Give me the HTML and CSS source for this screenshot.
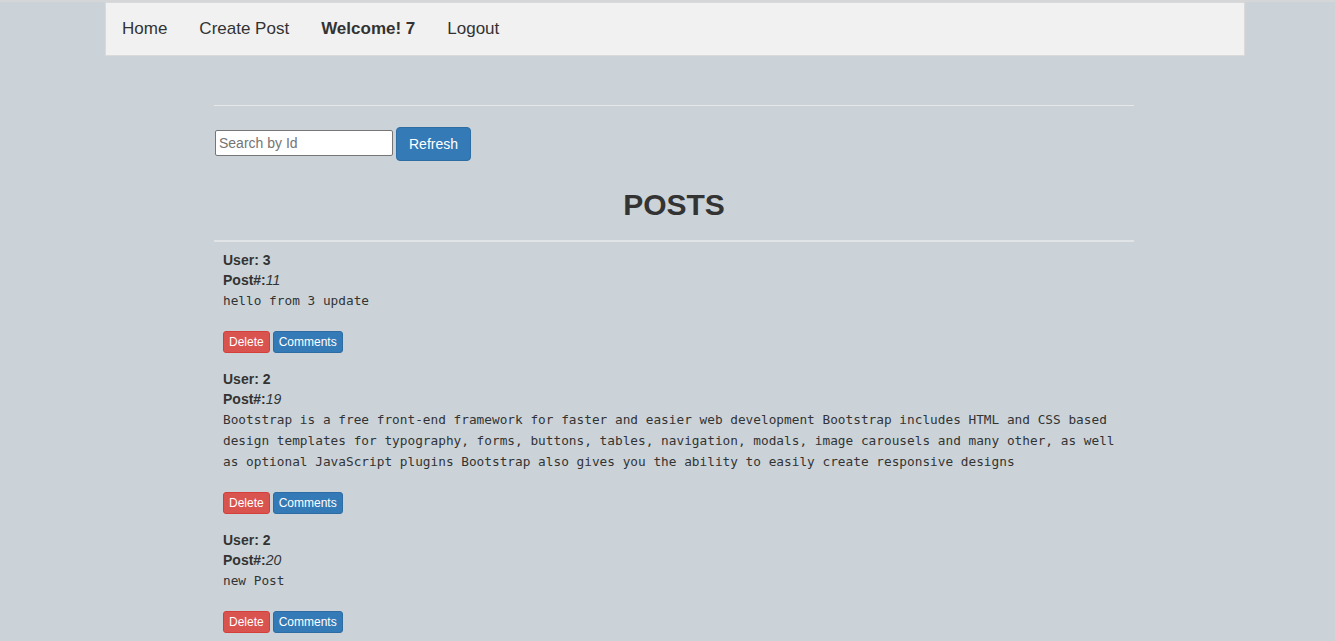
FILE: index.html
```html
<!DOCTYPE html>
<html lang="en">
<head>
<meta charset="utf-8">
<title>Posts</title>
<link rel="stylesheet" href="styles.css">
</head>
<body>
<nav class="navbar">
  <a class="nav-link" href="#">Home</a>
  <a class="nav-link" href="#">Create Post</a>
  <span class="nav-link nav-welcome">Welcome! 7</span>
  <a class="nav-link" href="#">Logout</a>
</nav>
<main class="content">
  <hr class="rule-top">
  <div class="search-row">
    <input class="search-input" type="text" placeholder="Search by Id">
    <button class="btn btn-primary">Refresh</button>
  </div>
  <h2 class="title">POSTS</h2>
  <hr class="rule-posts">
  <section class="posts">
    <article class="post">
      <div class="post-meta"><b>User: 3</b></div>
      <div class="post-meta"><b>Post#:</b><i>11</i></div>
      <p class="post-body">hello from 3 update</p>
      <div class="post-actions">
        <button class="btn-xs btn-danger">Delete</button>
        <button class="btn-xs btn-info">Comments</button>
      </div>
    </article>
    <article class="post">
      <div class="post-meta"><b>User: 2</b></div>
      <div class="post-meta"><b>Post#:</b><i>19</i></div>
      <p class="post-body">Bootstrap is a free front-end framework for faster and easier web development Bootstrap includes HTML and CSS based design templates for typography, forms, buttons, tables, navigation, modals, image carousels and many other, as well as optional JavaScript plugins Bootstrap also gives you the ability to easily create responsive designs</p>
      <div class="post-actions">
        <button class="btn-xs btn-danger">Delete</button>
        <button class="btn-xs btn-info">Comments</button>
      </div>
    </article>
    <article class="post">
      <div class="post-meta"><b>User: 2</b></div>
      <div class="post-meta"><b>Post#:</b><i>20</i></div>
      <p class="post-body">new Post</p>
      <div class="post-actions">
        <button class="btn-xs btn-danger">Delete</button>
        <button class="btn-xs btn-info">Comments</button>
      </div>
    </article>
  </section>
</main>
</body>
</html>
```

FILE: styles.css
```css
* { box-sizing: border-box; }

html, body {
  margin: 0;
  padding: 0;
}

body {
  background: #cbd3d9;
  border-top: 2px solid #d4d6d8;
  font-family: "Liberation Sans", Arial, sans-serif;
  font-size: 14px;
  line-height: 20px;
  color: #333;
}

.navbar {
  margin-left: 105px;
  width: 1140px;
  height: 54px;
  background: #f1f1f1;
  border: 1px solid #dadada;
  display: flex;
  align-items: center;
  padding-left: 0;
}

.nav-link {
  font-size: 17px;
  color: #333;
  text-decoration: none;
  padding: 0 16px;
  line-height: 24px;
}

.nav-welcome { font-weight: bold; }

.content {
  margin-left: 214px;
  width: 920px;
}

.rule-top {
  margin: 49px 0 0;
  border: 0;
  border-top: 1px solid #e4e8ea;
  height: 0;
}

.search-row {
  display: flex;
  align-items: center;
  gap: 3px;
  margin-top: 21px;
  height: 34px;
}

.search-input {
  margin-left: 1px;
  width: 178px;
  height: 26px;
  border: 1px solid #767676;
  border-radius: 2px;
  background: #fff;
  font-family: "Liberation Sans", Arial, sans-serif;
  font-size: 14px;
  padding: 1px 3px;
  color: #333;
  margin-top: -2px;
}

.search-input::placeholder { color: #757575; }

.btn {
  font-family: "Liberation Sans", Arial, sans-serif;
  font-size: 14px;
  line-height: 20px;
  padding: 6px 12px;
  height: 34px;
  width: 75px;
  border-radius: 4px;
  border: 1px solid transparent;
  color: #fff;
  cursor: pointer;
}

.btn-primary {
  background: #337ab7;
  border-color: #2e6da4;
}

.title {
  margin: 27px 0 0;
  text-align: center;
  font-size: 30px;
  line-height: 33px;
  font-weight: bold;
  color: #333;
}

.rule-posts {
  margin: 19px 0 0;
  border: 0;
  border-top: 2px solid #e1e4e6;
  height: 0;
}

.posts {
  padding: 8px 9px 0;
}

.post { margin-bottom: 16px; }

.post-meta {
  line-height: 20px;
}

.post-meta i { font-style: italic; }

.post-body {
  margin: 0;
  font-family: "DejaVu Sans Mono", "Liberation Mono", monospace;
  font-size: 12.77px;
  line-height: 21px;
  color: #333;
}

.post-actions {
  margin-top: 20px;
  display: flex;
  gap: 3px;
}

.btn-xs {
  font-family: "Liberation Sans", Arial, sans-serif;
  font-size: 12px;
  line-height: 18px;
  padding: 1px 5px;
  height: 22px;
  border-radius: 3px;
  border: 1px solid transparent;
  color: #fff;
  cursor: pointer;
}

.btn-danger {
  background: #d9534f;
  border-color: #d43f3a;
}

.btn-info {
  background: #337ab7;
  border-color: #2e6da4;
}
```
